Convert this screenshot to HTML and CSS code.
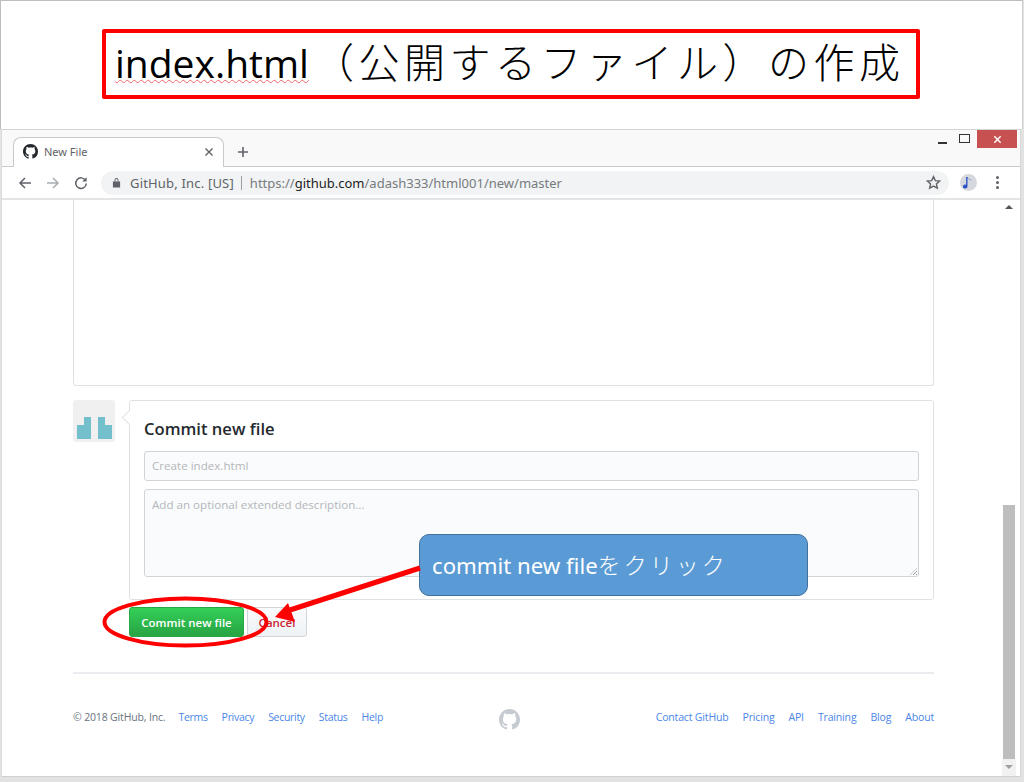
FILE: index.html
```html
<!DOCTYPE html>
<html lang="ja">
<head>
<meta charset="utf-8">
<title>index.html（公開するファイル）の作成</title>
<link rel="stylesheet" href="styles.css">
</head>
<body>
<div class="slide">
  <header class="slide-head">
    <h1 class="title"><span class="title-latin">index.html</span><span class="title-cjk">（公開するファイル）の作成</span></h1>
  </header>
  <div class="browser">
    <div class="tabstrip">
      <div class="tab">
        <svg class="tab-logo" viewBox="0 0 16 16"><path d="M8 0C3.58 0 0 3.58 0 8c0 3.54 2.29 6.53 5.47 7.59.4.07.55-.17.55-.38 0-.19-.01-.82-.01-1.49-2.01.37-2.53-.49-2.69-.94-.09-.23-.48-.94-.82-1.13-.28-.15-.68-.52-.01-.53.63-.01 1.08.58 1.23.82.72 1.21 1.87.87 2.33.66.07-.52.28-.87.51-1.07-1.78-.2-3.64-.89-3.64-3.95 0-.87.31-1.59.82-2.15-.08-.2-.36-1.02.08-2.12 0 0 .67-.21 2.2.82.64-.18 1.32-.27 2-.27.68 0 1.36.09 2 .27 1.53-1.04 2.2-.82 2.2-.82.44 1.1.16 1.92.08 2.12.51.56.82 1.27.82 2.15 0 3.07-1.87 3.75-3.65 3.95.29.25.54.73.54 1.48 0 1.07-.01 1.93-.01 2.2 0 .21.15.46.55.38A8.013 8.013 0 0016 8c0-4.42-3.58-8-8-8z"/></svg>
        <span class="tab-title">New File</span>
        <svg class="tab-close" viewBox="0 0 10 10"><path d="M1.5 1.5l7 7M8.5 1.5l-7 7"/></svg>
      </div>
      <svg class="newtab" viewBox="0 0 12 12"><path d="M6 1v10M1 6h10"/></svg>
      <div class="winctl">
        <span class="win-min"></span>
        <span class="win-max"></span>
        <span class="win-close"><svg viewBox="0 0 10 10"><path d="M1.5 1.5l7 7M8.5 1.5l-7 7"/></svg></span>
      </div>
    </div>
    <div class="toolbar">
      <svg class="nav" viewBox="0 0 14 14"><path d="M13 7H2M7 2L2 7l5 5"/></svg>
      <svg class="nav nav-off" viewBox="0 0 14 14"><path d="M1 7h11M7 2l5 5-5 5"/></svg>
      <svg class="nav" viewBox="0 0 14 14"><path d="M11.6 4.5A5.3 5.3 0 1 0 12.3 7.5"/><path class="fill" d="M12.6 1.2v4.4H8.2z"/></svg>
      <div class="omnibox">
        <svg class="lock" viewBox="0 0 10 12"><path d="M1 5h8v6.500H1zM2.800 5V3.200a2.200 2.200 0 0 1 4.400 0V5H6.200V3.200a1.200 1.200 0 0 0-2.400 0V5z"/></svg>
        <span class="org">GitHub, Inc. [US]</span>
        <span class="sep"></span>
        <span class="url">https://<b>github.com</b>/adash333/html001/new/master</span>
        <svg class="star" viewBox="0 0 14 14"><path d="M7 1.500l1.700 3.700 4 .4-3 2.700.9 4L7 10.300l-3.600 2 .9-4-3-2.700 4-.4z"/></svg>
      </div>
      <span class="profile"><svg viewBox="0 0 12 14"><path d="M5 2v8.500a2.300 2 0 1 1-1.400-1.800V1h1.400c.4 2 2.500 2.300 4.500 3.500-1.500-.4-3-.8-4.500-2.500z"/></svg></span>
      <span class="menu"><i></i><i></i><i></i></span>
    </div>
    <div class="viewport">
      <main class="page">
        <div class="editor"></div>
        <section class="commit">
          <div class="avatar">
            <svg viewBox="0 0 42 42"><path d="M4 39V25h7v-8h7v22zM25 17h7v8h7v14H25z"/></svg>
          </div>
          <div class="commit-box">
            <h2 class="commit-title">Commit new file</h2>
            <div class="field field-line">Create index.html</div>
            <div class="field field-area">Add an optional extended description...</div>
          </div>
        </section>
        <div class="actions">
          <span class="btn btn-primary">Commit new file</span>
          <span class="btn btn-cancel">Cancel</span>
        </div>
        <footer class="foot">
          <div class="foot-left">
            <span class="copy">© 2018 GitHub, Inc.</span>
            <a>Terms</a><a>Privacy</a><a>Security</a><a>Status</a><a>Help</a>
          </div>
          <svg class="foot-logo" viewBox="0 0 16 16"><path d="M8 0C3.58 0 0 3.58 0 8c0 3.54 2.29 6.53 5.47 7.59.4.07.55-.17.55-.38 0-.19-.01-.82-.01-1.49-2.01.37-2.53-.49-2.69-.94-.09-.23-.48-.94-.82-1.13-.28-.15-.68-.52-.01-.53.63-.01 1.08.58 1.23.82.72 1.21 1.87.87 2.33.66.07-.52.28-.87.51-1.07-1.78-.2-3.64-.89-3.64-3.95 0-.87.31-1.59.82-2.15-.08-.2-.36-1.02.08-2.12 0 0 .67-.21 2.2.82.64-.18 1.32-.27 2-.27.68 0 1.36.09 2 .27 1.53-1.04 2.2-.82 2.2-.82.44 1.1.16 1.92.08 2.12.51.56.82 1.27.82 2.15 0 3.07-1.87 3.75-3.65 3.95.29.25.54.73.54 1.48 0 1.07-.01 1.93-.01 2.2 0 .21.15.46.55.38A8.013 8.013 0 0016 8c0-4.42-3.58-8-8-8z"/></svg>
          <div class="foot-right">
            <a>Contact GitHub</a><a>Pricing</a><a>API</a><a>Training</a><a>Blog</a><a>About</a>
          </div>
        </footer>
      </main>
      <div class="scrollbar">
        <span class="sb-up"></span>
        <span class="sb-track"><span class="sb-thumb"></span></span>
        <span class="sb-down"></span>
      </div>
    </div>
  </div>
  <div class="callout">commit new file<span class="callout-cjk">をクリック</span></div>
  <svg class="marks" viewBox="0 0 1024 782">
    <ellipse cx="185.500" cy="622" rx="81" ry="23.500"/>
    <path class="shaft" d="M420 568L290 610"/>
    <path class="head" d="M275 617L288 603L295 622z"/>
  </svg>
</div>
</body>
</html>
```
FILE: styles.css
```css
* { box-sizing: border-box; }
html, body { margin: 0; padding: 0; }
body { width: 1024px; height: 782px; overflow: hidden; background: #fff; font-family: "Open Sans", "Noto Sans", sans-serif; }
.slide { position: relative; width: 1024px; height: 782px; display: flex; flex-direction: column; background: #e2e2e2; }
.slide-head { height: 129px; flex: none; background: #fff; border-top: 1px solid #bdbdbd; border-left: 1px solid #bdbdbd; border-right: 1px solid #d0d0d0; margin-right: 1px; padding: 28px 0 0 101px; }
.title { margin: 0; width: 818px; height: 70px; border: 4px solid #f00; border-radius: 2px; padding: 0 0 3px 9px; display: flex; align-items: center; font-weight: 400; color: #000; white-space: nowrap; }
.title-latin { font-family: "Open Sans", sans-serif; font-size: 39px; line-height: 50px; text-decoration: underline wavy #e66; text-decoration-thickness: 1px; text-underline-offset: 1px; }
.title-cjk { font-family: "Noto Sans CJK JP", sans-serif; font-weight: 300; font-size: 41px; line-height: 50px; letter-spacing: 4.500px; margin: 0 0 5px 4px; }

.browser { flex: none; height: 648px; margin: 0 3px 0 1px; display: flex; flex-direction: column; background: #fff; border-top: 1px solid #d4d4d4; border-left: 1px solid #dcdcdc; border-right: 1px solid #d8d8d8; border-bottom: 1px solid #d0d0d0; }
.tabstrip { height: 37px; flex: none; display: flex; align-items: flex-end; padding-left: 11px; background: #f9f9fa; border-bottom: 1px solid #c9cacb; position: relative; }
.tab { width: 211px; height: 30px; margin-bottom: -1px; background: #fff; border: 1px solid #c9cacb; border-bottom: 0; border-radius: 8px 8px 0 0; display: flex; align-items: center; padding: 0 9px 2px 9px; }
.tab-logo { width: 15px; height: 15px; fill: #24292e; flex: none; }
.tab-title { margin-left: 6px; font-size: 11px; color: #5f6368; flex: 1; font-family: "Noto Sans", sans-serif; }
.tab-close { width: 10px; height: 10px; fill: none; stroke: #5f6368; stroke-width: 1.4; }
.newtab { width: 12px; height: 12px; margin: 0 0 8px 13px; fill: none; stroke: #5f6368; stroke-width: 1.6; }
.winctl { margin-left: auto; align-self: flex-start; display: flex; align-items: flex-start; }
.win-min { width: 9px; height: 2px; background: #333; margin-top: 12px; }
.win-max { width: 11px; height: 9px; border: 1.5px solid #333; margin: 4px 0 0 12px; }
.win-close { width: 40px; height: 18px; margin: 0 3px 0 7px; background: #c75050; display: flex; align-items: center; justify-content: center; }
.win-close svg { width: 9px; height: 9px; fill: none; stroke: #fff; stroke-width: 1.6; }

.toolbar { height: 33px; flex: none; display: flex; align-items: center; padding: 0 0 0 16px; background: #fff; border-bottom: 2px solid #e3e4e5; }
.nav { width: 14px; height: 14px; margin-right: 14px; fill: none; stroke: #5f6368; stroke-width: 1.5; flex: none; }
.nav .fill { fill: #5f6368; stroke: none; }
.nav-off { stroke: #a9adb1; }
.omnibox { width: 848px; height: 24px; margin-left: -1px; border-radius: 12px; background: #f1f3f4; display: flex; align-items: center; padding: 0 8px 0 11px; font-family: "Noto Sans", sans-serif; font-size: 13px; color: #5f6368; white-space: nowrap; }
.lock { width: 9px; height: 11px; fill: #5f6368; flex: none; }
.org { margin-left: 9px; letter-spacing: .18px; }
.sep { width: 1px; height: 14px; background: #9a9da1; margin: 0 8px 0 7px; }
.url { color: #777b80; flex: 1; }
.url b { font-weight: 400; color: #222; }
.star { width: 15px; height: 15px; fill: none; stroke: #5f6368; stroke-width: 1.3; }
.profile { width: 17px; height: 17px; margin-left: 11px; border-radius: 50%; background: #d5d8dc; display: flex; align-items: center; justify-content: center; flex: none; }
.profile svg { width: 13px; height: 14px; fill: #2e56c8; }
.menu { width: 3px; margin-left: 19px; display: flex; flex-direction: column; gap: 2px; flex: none; }
.menu i { width: 3px; height: 3px; border-radius: 50%; background: #5f6368; }

.viewport { flex: 1; min-height: 0; display: flex; background: #fff; padding-right: 4px; }
.page { flex: 1; min-width: 0; padding: 0 68px 0 71px; color: #24292e; }
.editor { height: 186px; border: 1px solid #dfe2e5; border-top: 0; border-radius: 0 0 3px 3px; }
.commit { display: flex; margin-top: 14px; }
.avatar { width: 42px; height: 42px; border-radius: 3px; background: #f0f0f0; flex: none; }
.avatar svg { display: block; width: 42px; height: 42px; fill: #73bfcc; }
.commit-box { position: relative; flex: 1; margin-left: 14px; height: 200px; border: 1px solid #dfe2e5; border-radius: 3px; padding: 0 14px; }
.commit-box::before { content: ""; position: absolute; left: -6px; top: 11px; width: 10px; height: 10px; background: #fff; border-left: 1px solid #dfe2e5; border-bottom: 1px solid #dfe2e5; transform: rotate(45deg); }
.commit-title { position: relative; margin: 0; height: 50px; padding-top: 15px; font-size: 16.600px; line-height: 26px; font-weight: 600; color: #24292e; }
.field { background: #fafbfc; border: 1px solid #d1d5da; border-radius: 3px; padding: 0 7px; font-size: 11.600px; color: #b3b7bb; }
.field-line { height: 30px; line-height: 28px; }
.field-area { position: relative; height: 88px; margin-top: 8px; padding-top: 6px; line-height: 18px; }
.field-area::after { content: ""; position: absolute; right: 1px; bottom: 1px; width: 7px; height: 7px; background: repeating-linear-gradient(135deg, transparent 0 1.500px, #9a9a9a 1.500px 2.500px); clip-path: polygon(100% 0, 100% 100%, 0 100%); }
.actions { display: flex; margin: 7px 0 0 56px; gap: 3px; }
.btn { height: 30px; border-radius: 3px; font-size: 11.500px; font-weight: 600; line-height: 30px; text-align: center; border: 1px solid; }
.btn-primary { width: 115px; color: #fff; background: linear-gradient(#34d058, #28a745 90%); border-color: #28a745; }
.btn-cancel { width: 60px; color: #cb2431; background: linear-gradient(#fafbfc, #eff3f6 90%); border-color: #d1d5da; font-weight: 600; }
.foot { margin-top: 35px; height: 75px; border-top: 2px solid #eaecef; display: flex; justify-content: space-between; align-items: flex-start; padding-top: 35px; font-size: 10.500px; letter-spacing: -.16px; line-height: 16px; position: relative; }
.foot-left, .foot-right { display: flex; gap: 14px; white-space: nowrap; }
.foot-left a { letter-spacing: -.3px; }
.copy { color: #6a737d; margin-right: -1px; }
.foot a { color: #4a86e8; }
.foot-logo { position: absolute; left: 426px; top: 35px; width: 21px; height: 21px; fill: #c6cbd1; }

.scrollbar { width: 14px; flex: none; display: flex; flex-direction: column; background: #fff; }
.sb-up { height: 18px; flex: none; position: relative; }
.sb-up::after { content: ""; position: absolute; left: 3px; top: 5px; border: 4px solid transparent; border-top: 0; border-bottom: 4px solid #555; }
.sb-track { flex: 1; padding: 0 1px; display: flex; flex-direction: column; justify-content: flex-end; }
.sb-thumb { height: 254px; background: #bebebe; }
.sb-down { height: 17px; flex: none; position: relative; background: #f1f1f1; }
.sb-down::after { content: ""; position: absolute; left: 3px; top: 6px; border: 4px solid transparent; border-bottom: 0; border-top: 4px solid #a0a0a0; }

.callout { position: absolute; left: 419px; top: 534px; width: 389px; height: 62px; padding-left: 12px; border: 1px solid #41719c; border-radius: 10px; background: #5b9bd5; color: #fff; font-family: "Noto Sans", sans-serif; font-size: 22.200px; line-height: 58px; white-space: nowrap; }
.callout-cjk { font-family: "Noto Sans CJK JP", sans-serif; font-weight: 300; font-size: 23px; letter-spacing: 3px; }
.marks { position: absolute; left: 0; top: 0; width: 1024px; height: 782px; fill: none; stroke: #f00; stroke-width: 4; pointer-events: none; }
.marks .shaft { stroke-width: 5; }
.marks .head { fill: #f00; stroke: none; }
```
